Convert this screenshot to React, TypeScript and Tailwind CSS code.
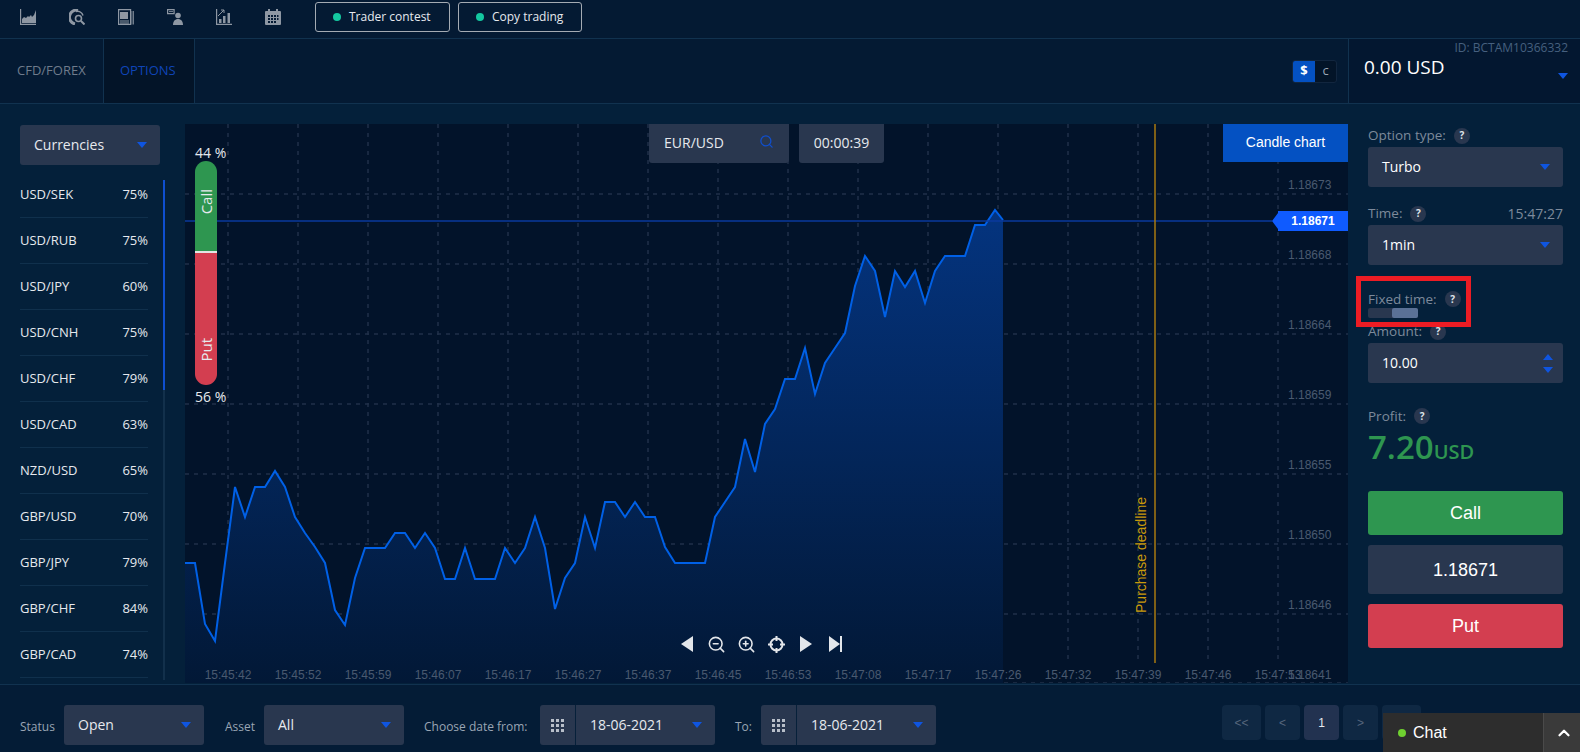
import React from 'react';
import { ChevronUp, Search, ZoomIn, ZoomOut } from 'lucide-react';

const pairs = [
  ['USD/SEK', '75%'],
  ['USD/RUB', '75%'],
  ['USD/JPY', '60%'],
  ['USD/CNH', '75%'],
  ['USD/CHF', '79%'],
  ['USD/CAD', '63%'],
  ['NZD/USD', '65%'],
  ['GBP/USD', '70%'],
  ['GBP/JPY', '79%'],
  ['GBP/CHF', '84%'],
  ['GBP/CAD', '74%'],
];

const prices = ['1.18673', '1.18668', '1.18664', '1.18659', '1.18655', '1.18650', '1.18646'];

const times = [
  '15:45:42', '15:45:52', '15:45:59', '15:46:07', '15:46:17', '15:46:27', '15:46:37', '15:46:45',
  '15:46:53', '15:47:08', '15:47:17', '15:47:26', '15:47:32', '15:47:39', '15:47:46', '15:47:53',
];

// page coordinates, the svg below uses the same ones through its viewBox
const line =
  '185,563 195,563 205,624 215,641 225,563 235,487 245,517 255,487 265,487 275,471 285,487 295,517 305,533 315,547 325,563 335,610 345,625 355,578 365,548 375,548 385,548 395,533 405,533 415,548 425,533 435,548 445,579 455,579 465,548 475,579 485,579 495,579 505,548 515,563 525,548 535,517 545,548 555,609 565,578 575,563 585,517 595,548 605,502 615,502 625,517 635,502 645,517 655,517 665,547 675,563 685,563 695,563 705,563 715,517 725,502 735,487 745,439 755,472 765,424 775,409 785,379 795,379 805,348 815,394 825,363 835,348 845,333 855,286 865,256 875,271 885,317 895,271 905,287 915,271 925,303 935,271 945,256 955,256 965,256 975,225 985,225 995,210 1003,220';

const Caret = ({ className = '' }: { className?: string }) => (
  <svg width="10" height="6" viewBox="0 0 10 6" className={className}>
    <polygon points="0,0 10,0 5,6" fill="#0f55e0" />
  </svg>
);

const Help = () => (
  <span className="flex h-4 w-4 items-center justify-center rounded-full bg-[#29374f] text-[10px] font-bold text-[#dfe4ea]">?</span>
);

const FieldLabel = ({ text, className = 'h-[23px]' }: { text: string; className?: string }) => (
  <div className={`flex items-center gap-2 text-[13.5px] text-[#7d8a9b] ${className}`}>
    <span>{text}</span>
    <Help />
  </div>
);

const SelectBox = ({ value }: { value: string }) => (
  <div className="flex h-10 items-center justify-between rounded-[3px] bg-[#29374f] pl-[14px] pr-[13px] text-sm text-white">
    <span>{value}</span>
    <Caret />
  </div>
);

const TopIcons = () => (
  <div className="flex h-[30px] items-center gap-[33px] pl-5 text-[#8e97a3]">
    <svg width="16" height="16" viewBox="0 0 16 16" fill="currentColor">
      <path d="M.6 0v15.400H16" fill="none" stroke="currentColor" strokeWidth="1.200" />
      <path d="M2 14v-4l2-2 2 1 2-2 1 1 2-2 1 2 2-2 2-5v13z" />
    </svg>
    <svg width="16" height="16" viewBox="0 0 16 16" fill="none" stroke="currentColor">
      <path d="M9 1.200A7 7 0 0 0 6 15" strokeWidth="3" />
      <path d="M7 2.500a6 6 0 0 1 7 4" strokeWidth="1.500" />
      <circle cx="9.500" cy="9.500" r="3" strokeWidth="1.600" />
      <path d="M12 12l3.500 3.500" strokeWidth="2" />
    </svg>
    <svg width="16" height="16" viewBox="0 0 16 16" fill="currentColor">
      <path d="M.6.600h12v14.800H.6z" fill="none" stroke="currentColor" strokeWidth="1.200" />
      <path d="M2 3h8v7H2zM2 11.500h9v1H2zM2 13.500h9v1H2z" />
      <path d="M14 2v13.500M15.500 2v13.500" stroke="currentColor" strokeWidth=".8" fill="none" />
    </svg>
    <svg width="16" height="16" viewBox="0 0 16 16" fill="currentColor">
      <path d="M.6.600h6.500v4H.6z" fill="none" stroke="currentColor" strokeWidth="1.200" />
      <path d="M2 2h4v.8H2z" />
      <circle cx="11" cy="6.500" r="2.800" />
      <path d="M6 16c0-3.800 2-6 5-6s5 2.200 5 6z" />
    </svg>
    <svg width="16" height="16" viewBox="0 0 16 16" fill="currentColor">
      <path d="M.6 0v15.400H16" fill="none" stroke="currentColor" strokeWidth="1.200" />
      <path d="M3 10h2.500v4H3zM7 7h2.500v7H7zM11.500 4H14v10h-2.500z" />
      <path d="M2 7l6-6M5 1h3v3" fill="none" stroke="currentColor" />
    </svg>
    <svg width="16" height="16" viewBox="0 0 16 16">
      <path d="M3 0h2v2h6V0h2v2h2a1 1 0 0 1 1 1v12a1 1 0 0 1-1 1H1a1 1 0 0 1-1-1V3a1 1 0 0 1 1-1h2z" fill="currentColor" />
      <path
        d="M3 6h2v2H3zM6 6h2v2H6zM9 6h2v2H9zM12 6h1.500v2H12zM3 9h2v2H3zM6 9h2v2H6zM9 9h2v2H9zM12 9h1.500v2H12zM3 12h2v2H3zM6 12h2v2H6zM9 12h2v2H9z"
        fill="#041a33"
      />
    </svg>
  </div>
);

const PromoButton = ({ text, className }: { text: string; className: string }) => (
  <div className={`flex h-[30px] items-center gap-2 rounded-[3px] border border-[#a4abb3] pl-[17px] text-xs text-[#e6e9ee] ${className}`}>
    <span className="h-2 w-2 rounded-full bg-[#14c8a0]" />
    <span>{text}</span>
  </div>
);

const Sidebar = () => (
  <aside className="w-[185px] shrink-0 pt-[21px]">
    <div className="ml-5 flex h-10 w-[140px] items-center justify-between rounded-[3px] bg-[#29374f] pl-[14px] pr-[13px] text-sm text-[#e6e9ee]">
      <span>Currencies</span>
      <Caret />
    </div>
    <div className="mt-[7px] flex h-[508px] overflow-hidden pl-5">
      <div className="w-[128px]">
        {pairs.map(([name, pct]) => (
          <div key={name} className="flex h-[46px] items-center justify-between border-b border-[#10304c] text-[13px] text-[#e6e9ee]">
            <span>{name}</span>
            <span>{pct}</span>
          </div>
        ))}
      </div>
      <div className="ml-[15px] mt-2 w-[2px] bg-[#12304b]">
        <div className="h-[210px] bg-[#0f4fd0]" />
      </div>
    </div>
  </aside>
);

const Chart = () => (
  <section className="relative mt-5 h-[559px] flex-1 overflow-hidden bg-[#02132a] font-['Liberation_Sans',sans-serif]">
    <svg width="1163" height="559" viewBox="185 124 1163 559" className="absolute inset-0">
      <defs>
        <linearGradient id="area" gradientUnits="userSpaceOnUse" x1="0" y1="210" x2="0" y2="683">
          <stop offset="0" stopColor="#04347f" />
          <stop offset="1" stopColor="#021836" />
        </linearGradient>
      </defs>
      {[228, 298, 368, 438, 508, 578, 648, 718, 788, 858, 928, 998, 1068, 1138, 1208, 1278].map(x => (
        <line key={x} x1={x} y1="124" x2={x} y2="659" stroke="#20304a" strokeWidth="1.500" strokeDasharray="4 5" />
      ))}
      {[194, 264, 334, 404, 474, 544, 614, 683].map(y => (
        <line key={y} x1="185" y1={y} x2="1348" y2={y} stroke="#20304a" strokeWidth="1.500" strokeDasharray="4 5" />
      ))}
      <polygon points={`${line} 1003,683 185,683`} fill="url(#area)" />
      <polyline points={line} fill="none" stroke="#0060e6" strokeWidth="2" />
      <line x1="185" y1="221" x2="1272" y2="221" stroke="#0a3a9e" strokeWidth="1.500" />
      <line x1="1155" y1="124" x2="1155" y2="663" stroke="#a87a10" strokeWidth="1.500" />
    </svg>

    {prices.map((p, i) => (
      <span key={p} className="absolute left-[1103px] -translate-y-1/2 text-xs text-[#4a5a70]" style={{ top: 61 + i * 70 }}>
        {p}
      </span>
    ))}
    {times.map((t, i) => (
      <span key={t} className="absolute top-[543px] -translate-x-1/2 text-xs text-[#4a5a70]" style={{ left: 43 + i * 70 }}>
        {t}
      </span>
    ))}
    <span className="absolute left-[1103px] top-[543px] text-xs text-[#4a5a70]">1.18641</span>

    <span className="absolute left-[946px] top-[373px] rotate-180 text-sm text-[#c99a0a] [writing-mode:vertical-rl]">Purchase deadline</span>

    <div className="absolute left-[1087px] top-[87px] flex h-5 items-center">
      <svg width="6" height="20" viewBox="0 0 6 20">
        <polygon points="6,2 0,10 6,18" fill="#0f5bff" />
      </svg>
      <div className="flex h-5 w-[70px] items-center justify-center bg-[#0f5bff] text-xs font-bold text-white">1.18671</div>
    </div>

    <div className="absolute left-[464px] top-0 flex h-[39px] w-[140px] items-center justify-between rounded-b-[3px] bg-[#29374f] pb-[2px] pl-[15px] pr-[15px] font-['Open_Sans',sans-serif] text-sm text-[#e6e9ee]">
      <span>EUR/USD</span>
      <Search size={15} strokeWidth={2} className="mb-[3px] text-[#0f4fd0]" />
    </div>
    <div className="absolute left-[614px] top-0 flex h-[39px] w-[85px] items-center justify-center rounded-b-[3px] bg-[#29374f] pb-[1px] font-['Open_Sans',sans-serif] text-sm text-[#e6e9ee]">
      00:00:39
    </div>
    <div className="absolute right-0 top-0 flex h-[38px] w-[125px] items-center justify-center bg-[#0451c2] pb-[3px] text-sm text-white">Candle chart</div>

    <div className="absolute left-[10px] top-[21px] flex w-[22px] flex-col font-['Open_Sans',sans-serif] text-[#e6e9ee]">
      <span className="h-4 whitespace-nowrap text-sm leading-4">44 %</span>
      <div className="flex h-[92px] w-[22px] flex-col items-center rounded-t-[11px] border-b-2 border-[#e3e3e3] bg-[#2e9650] pt-[28px]">
        <span className="rotate-180 text-[15px] leading-[22px] [writing-mode:vertical-rl]">Call</span>
      </div>
      <div className="flex h-[132px] w-[22px] flex-col items-center justify-end rounded-b-[11px] bg-[#d33e50] pb-[23px]">
        <span className="rotate-180 text-[15px] leading-[22px] [writing-mode:vertical-rl]">Put</span>
      </div>
      <span className="mt-1 h-4 whitespace-nowrap text-sm leading-4">56 %</span>
    </div>

    <div className="absolute left-[496px] top-[512px] flex h-4 items-center text-[#e3e6ea]">
      <svg width="12" height="16" viewBox="0 0 12 16">
        <polygon points="12,0 12,16 0,8" fill="currentColor" />
      </svg>
      <ZoomOut size={19} strokeWidth={2} className="ml-[14px]" />
      <ZoomIn size={19} strokeWidth={2} className="ml-[11px]" />
      <svg width="19" height="19" viewBox="0 0 19 19" fill="none" stroke="currentColor" strokeWidth="2" className="ml-[11px]">
        <circle cx="9.500" cy="9.500" r="6" />
        <path d="M9.500 1v5M9.500 13v5M1 9.500h5M13 9.500h5" />
      </svg>
      <svg width="12" height="16" viewBox="0 0 12 16" className="ml-[14px]">
        <polygon points="0,0 0,16 12,8" fill="currentColor" />
      </svg>
      <svg width="13" height="16" viewBox="0 0 13 16" className="ml-[17px]">
        <polygon points="0,0 0,16 11,8" fill="currentColor" />
        <rect x="11" width="2" height="16" fill="currentColor" />
      </svg>
    </div>
  </section>
);

const OrderPanel = () => (
  <aside className="relative w-[232px] shrink-0 pl-5 pr-[17px] pt-5">
    <FieldLabel text="Option type:" />
    <SelectBox value="Turbo" />
    <div className="mt-[15px] flex h-[23px] items-center justify-between">
      <FieldLabel text="Time:" />
      <span className="text-sm text-[#7d8a9b]">15:47:27</span>
    </div>
    <SelectBox value="1min" />
    <FieldLabel text="Fixed time:" className="mt-6 h-5" />
    <div className="-mt-[1px] flex h-[10px] w-[50px] justify-end rounded-[2px] bg-[#29374f]">
      <div className="h-[10px] w-[26px] rounded-[2px] bg-[#5a7196]" />
    </div>
    <FieldLabel text="Amount:" className="mt-[2px] h-[23px]" />
    <div className="flex h-10 items-center justify-between rounded-[3px] bg-[#29374f] pl-[14px] pr-[10px] text-sm text-white">
      <span>10.00</span>
      <div className="flex flex-col gap-[7px]">
        <Caret className="rotate-180" />
        <Caret />
      </div>
    </div>
    <FieldLabel text="Profit:" className="mt-[22px] h-[22px]" />
    <div className="flex h-10 items-baseline text-[#2e9650]">
      <span className="text-[33px] font-semibold leading-10">7.20</span>
      <span className="text-[20px] font-semibold leading-10">USD</span>
    </div>
    <div className="mt-6 flex h-11 items-center justify-center rounded-[3px] bg-[#2e9650] font-['Liberation_Sans',sans-serif] text-lg text-white">Call</div>
    <div className="mt-[10px] flex h-[49px] items-center justify-center rounded-[3px] bg-[#29374f] font-['Liberation_Sans',sans-serif] text-lg text-white">1.18671</div>
    <div className="mt-[10px] flex h-11 items-center justify-center rounded-[3px] bg-[#d33e50] font-['Liberation_Sans',sans-serif] text-lg text-white">Put</div>

    {/* red annotation drawn over the screenshot */}
    <div className="absolute left-2 top-[172px] h-[51px] w-[115px] border-[5px] border-[#ed1c24]" />
  </aside>
);

const DateField = () => (
  <div className="flex h-10 rounded-[3px] bg-[#29374f] text-[#e6e9ee]">
    <div className="flex w-9 items-center justify-center border-r border-[#06203a]">
      <div className="grid grid-cols-3 gap-[2px]">
        {Array.from({ length: 9 }).map((_, i) => (
          <span key={i} className="h-[3px] w-[3px] bg-[#b8bfc9]" />
        ))}
      </div>
    </div>
    <div className="flex w-[139px] items-center justify-between pl-[14px] pr-[13px] text-sm">
      <span>18-06-2021</span>
      <Caret />
    </div>
  </div>
);

const PageButton = ({ text, className, active }: { text: string; className: string; active?: boolean }) => (
  <div
    className={`flex h-[35px] items-center justify-center rounded-[4px] font-['Liberation_Sans',sans-serif] text-xs ${className} ${
      active ? 'bg-[#223250] text-[#e6e9ee]' : 'bg-[#0f2843] text-[#56667c]'
    }`}
  >
    {text}
  </div>
);

const BottomBar = () => (
  <footer className="flex flex-1 items-start border-t border-[#11324f] bg-[#041c36] pt-5 text-xs text-[#9aa5b4]">
    <div className="flex h-10 w-[64px] items-center pl-5 pt-[3px]">Status</div>
    <div className="flex h-10 w-[140px] items-center justify-between rounded-[3px] bg-[#29374f] pl-[14px] pr-[13px] text-sm text-[#e6e9ee]">
      <span>Open</span>
      <Caret />
    </div>
    <div className="ml-[21px] flex h-10 w-[39px] items-center pt-[3px]">Asset</div>
    <div className="flex h-10 w-[140px] items-center justify-between rounded-[3px] bg-[#29374f] pl-[14px] pr-[13px] text-sm text-[#e6e9ee]">
      <span>All</span>
      <Caret />
    </div>
    <div className="ml-5 flex h-10 w-[116px] items-center pt-[3px]">Choose date from:</div>
    <DateField />
    <div className="ml-5 flex h-10 w-[26px] items-center pt-[3px]">To:</div>
    <DateField />
    <div className="ml-[286px] flex gap-1">
      <PageButton text="<<" className="w-[39px]" />
      <PageButton text="<" className="w-[35px]" />
      <PageButton text="1" className="w-[35px]" active />
      <PageButton text=">" className="w-[35px]" />
      <PageButton text=">>" className="w-[39px]" />
    </div>
  </footer>
);

export default function App() {
  return (
    <div className="relative flex h-[752px] w-[1580px] flex-col overflow-hidden bg-[#04203a] font-['Open_Sans',sans-serif]">
      <header className="flex h-[39px] shrink-0 items-start border-b border-[#11324f] bg-[#041a33] pt-[2px]">
        <TopIcons />
        <PromoButton text="Trader contest" className="ml-[34px] w-[135px]" />
        <PromoButton text="Copy trading" className="ml-2 w-[124px]" />
      </header>

      <div className="flex h-[65px] shrink-0 items-stretch border-b border-[#11324f] bg-[#041a33] text-[13px]">
        <div className="flex w-[104px] items-center border-r border-[#11324f] pl-[17px] text-[#6f7c8c]">CFD/FOREX</div>
        <div className="flex w-[91px] items-center border-r border-[#11324f] bg-[#031428] pl-[16px] text-[#0f45b8]">OPTIONS</div>
        <div className="flex flex-1 items-center justify-end pr-[11px]">
          <div className="flex h-[23px] w-[45px] overflow-hidden rounded-[3px] border border-[#12263f] bg-[#031428] text-[13px] text-white">
            <span className="flex w-[22px] items-center justify-center bg-[#0451c2] font-bold">$</span>
            <span className="flex flex-1 items-center justify-center text-[#9aa5b4]">c</span>
          </div>
        </div>
        <div className="relative w-[232px] shrink-0 border-l border-[#11324f] bg-[#031730] pl-[15px] pt-[13px] text-white">
          <div className="text-[19px] leading-[30px]">0.00 USD</div>
          <span className="absolute right-3 top-[1px] text-xs text-[#46607f]">ID: BCTAM10366332</span>
          <Caret className="absolute bottom-[24px] right-3" />
        </div>
      </div>

      <main className="flex h-[580px] shrink-0">
        <Sidebar />
        <Chart />
        <OrderPanel />
      </main>

      <BottomBar />

      <div className="absolute bottom-0 right-0 flex h-[39px] w-[197px] items-center bg-[#2d2d2d] font-['Liberation_Sans',sans-serif] text-base text-white">
        <span className="ml-[15px] h-2 w-2 rounded-full bg-[#6fd030]" />
        <span className="ml-[7px] flex-1">Chat</span>
        <div className="flex h-full w-[37px] items-center justify-center border-l border-[#4a4a4a] bg-[#3a3a3a] pl-[3px]">
          <ChevronUp size={18} strokeWidth={3} />
        </div>
      </div>
    </div>
  );
}
